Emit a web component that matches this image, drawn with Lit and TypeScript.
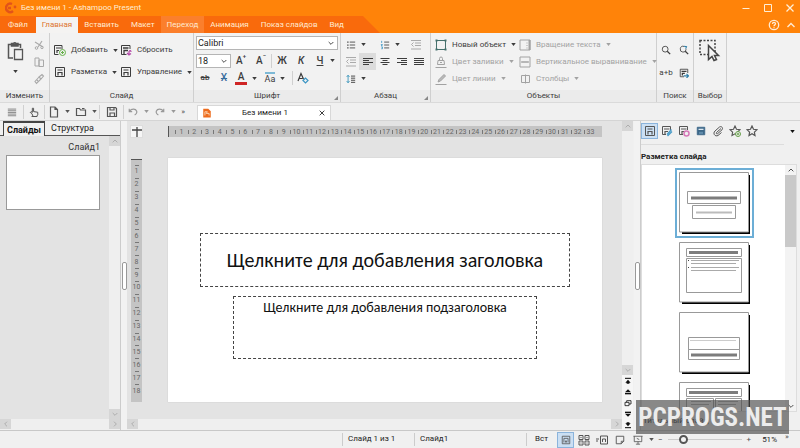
import { LitElement, html, css, svg, nothing } from "lit";
import { customElement, state } from "lit/decorators.js";
import { classMap } from "lit/directives/class-map.js";

/* Icon bodies, each drawn on a 12 x 12 grid unless noted. */
const icons: Record<string, unknown> = {
  logo: svg`<path d="M7 2a4.200 4.200 0 1 0 1 7M3 6h3" stroke="#e2531a" stroke-width="2.400"/><circle cx="10" cy="5" r="1.400" fill="#e2531a" stroke="none"/>`,
  cut: svg`<path d="M2 3l8 5M9 2L5 8" stroke-width="1.200"/><circle cx="3.500" cy="9" r="1.300"/><circle cx="9" cy="8.500" r="1.200"/>`,
  copy: svg`<path d="M2 2h4v8H2zM6 4h4.500v6.500H6z" fill="#f1f1f1"/>`,
  brush: svg`<path d="M6 4l3-2.500 1.500 1.500L8 6zM6 4L2 8.500 3.500 10.500 8 6zM4 7l1 1" stroke-width="1.100"/>`,
  layout: svg`<path d="M1.500 1.500h9v9h-9z"/><path d="M3.500 4h5M4 9.500V6.500h4v3" stroke-width="1.200"/>`,
  addSlide: svg`<path d="M8 5V1.500H.500v9h4"/><path d="M2 4h5M3 9V6.500h2" stroke-width="1.200"/><circle cx="8.500" cy="8.500" r="3" stroke="#66b04a" fill="#f1f1f1"/><path d="M7 8.500h3M8.500 7v3" stroke="#66b04a"/>`,
  reset: svg`<path d="M10 5V1.500H1.500v9h5"/><path d="M3 4h5.500M4 10V6.500h4" stroke-width="1.300"/><path d="M7 9l2 2 2-1.500M9 11V7.500c1-1.500 2-1 2 .500" stroke="#b44aa8" stroke-width="1.200"/>`,
  eraser: svg`<path d="M1 9L4 1.500 6.500 7M2 6.500h3.500" stroke-width="1.200"/><path d="M6 8.500l2.500-2.500L11 8.500 8.500 11z" stroke="#3a95c4" stroke-width="1.200"/>`,
  bullets: svg`<path d="M4.500 2.500H11M4.500 6H11M4.500 9.500H11"/><path d="M1.500 2.500h1.500M1.500 6h1.500M1.500 9.500h1.500" stroke-width="1.500"/>`,
  numbers: svg`<path d="M5 2.500h6M5 6h6M5 9.500h6"/><path d="M2 1v2.500M1 5.500h2l-1.500 1.500H3M1.500 8.500H3v2H1.500" stroke="#3a95c4"/>`,
  indent: svg`<path d="M1 1.500h10M5 4h6M5 6.500h6M1 10h10M3.500 3.500L1.500 5.500 3.500 7.500" stroke="#aaa"/>`,
  left: svg`<path d="M1 2.500h10M1 4.500h6M1 6.500h10M1 8.500h6" stroke-width="1.200"/>`,
  center: svg`<path d="M1.500 2.500h9M3.500 4.500h5M1.500 6.500h9M3.500 8.500h5" stroke-width="1.200"/>`,
  right: svg`<path d="M1 2.500h10M5 4.500h6M1 6.500h10M5 8.500h6" stroke-width="1.200"/>`,
  justify: svg`<path d="M1 2.500h10M1 4.500h10M1 6.500h10M1 8.500h10" stroke-width="1.200"/>`,
  spacing: svg`<path d="M6 2.500h5M6 5h5M6 7.500h5M6 10h5" stroke-width="1.100"/><path d="M2.500 1.500v9M.800 3.500L2.500 1.500 4.200 3.500M.800 8.500l1.700 2 1.700-2" stroke="#2f8fb8"/>`,
  object: svg`<path d="M1.500 1.500h9v9h-9z" stroke="#46716c"/><path d="M.500.500h2v2h-2zM9.500.500h2v2h-2zM.500 9.500h2v2h-2zM9.500 9.500h2v2h-2z" fill="#46716c" stroke="none"/>`,
  fill: svg`<path d="M3 4.500h6l.500 4h-7zM4.500 4V2.500a1.500 1.500 0 0 1 3 0V4M5 6.500h2M.500 11.500h11"/>`,
  pen: svg`<path d="M3 9l1-2.500L9 1.500 10.500 3 5.500 8z" fill="#bbb"/><path d="M.500 11.500h11"/>`,
  rotate: svg`<path d="M1 1h10v10H1zM8 3.500v1M8 6v1M8 8.500v1"/><path d="M10.500 1v10" stroke-width="2"/>`,
  valign: svg`<path d="M1 1h10v10H1zM2.500 6h7"/><path d="M3 5v2M5 5v2M7 5v2M9 5v2"/>`,
  columns: svg`<path d="M2.500 2.500h8v7h-8zM6.500 1.500v9"/>`,
  search: svg`<circle cx="5" cy="5" r="3.500"/><path d="M7.500 7.500L11 11" stroke-width="1.500"/>`,
  searchNext: svg`<path d="M8.500 5A3.500 3.500 0 1 1 6 1.700"/><path d="M7.500 7.500L11 11" stroke-width="1.500"/><path d="M6 1.500l3 .500L8 4.500" stroke="#2f7fa8" stroke-width="1.300"/>`,
  goto: svg`<path d="M10.500 6V1.500h-9v9H6"/><path d="M3 4h6M4 9V6.500h3" stroke-width="1.500"/><path d="M5.500 9.500H11M9 7l2.500 2.500L9 12" stroke="#2f7fa8" stroke-width="1.400"/>`,
  lines: svg`<path d="M1 2.500h10M1 4.500h10M1 6.500h10M1 8.500h10M1 10.500h10" stroke-width=".8"/>`,
  hand: svg`<path d="M3.500 8L1.500 6.500l1-1 1.500 1V1.500h1.500v4l5 .800v3L9 11.500H5z" stroke-width="1.200"/><path d="M3 11.500h7" stroke-width="1.200"/>`,
  page: svg`<path d="M2.500 1h4.500l2.500 2.500V11h-7zM7 1v2.500h2.500" stroke-width="1.200"/>`,
  folder: svg`<path d="M1.500 9.500V2.500h3l1 1.500h5v5.500zM7 2.500h2.500" stroke-width="1.200"/>`,
  save: svg`<path d="M1.500 1.500h8l1 1v8h-9zM4 1.500V4h4V1.500M4 10.500V7h4.500v3.500" stroke-width="1.200"/>`,
  undo: svg`<path d="M1.500 2v3.500H5M2 5C4 2 9 1.500 10.500 5c.500 2-1 4-2.500 4.500" stroke-width="1.400"/>`,
  redo: svg`<path d="M10.500 2v3.500H7M10 5C8 2 3 1.500 1.500 5c-.500 2 1 4 2.500 4.500" stroke-width="1.400"/>`,
  document: svg`<path d="M1.500 1h6l3 3v7.500h-9z" fill="#ed6c1e" stroke="none"/><path d="M3.500 9V4.500h3L5 6.500h3.500V9" stroke="#ffe1c4"/>`,
  cross: svg`<path d="M2.500 2.500l7 7M9.500 2.500l-7 7" stroke-width="1.300"/>`,
  help: svg`<circle cx="6" cy="6" r="4.700" stroke-width="1.300"/><path d="M4.500 5c0-2 3-2 3-.200C7.500 6 6 5.800 6 7.200M6 8.200v1" stroke-width="1.300"/>`,
  minimize: svg`<path d="M2.500 6.500h7"/>`,
  maximize: svg`<path d="M2.500 2.500h7v7h-7z"/>`,
  up: svg`<path d="M2.500 8L6 4.500 9.500 8" stroke-width="1.400"/>`,
  down: svg`<path d="M2.500 4.500L6 8l3.500-3.500" stroke-width="1.400"/>`,
  prev: svg`<path d="M7.500 2.500L4 6l3.500 3.500" stroke-width="1.400"/>`,
  next: svg`<path d="M4.500 2.500L8 6 4.500 9.500" stroke-width="1.400"/>`,
  cornerMark: svg`<path d="M6 1v10M1 4h10" stroke-width="1.300"/>`,
  editSlide: svg`<path d="M9.500 5V1.500H1.500v8H5"/><path d="M3 4h5.500M4 9V6.500h3" stroke-width="1.200"/><path d="M6 9.500l4.500-5M6.500 11l4.500-4.500" stroke="#4a9cc8" stroke-width="1.400"/>`,
  paletteSlide: svg`<path d="M9.500 5V1.500H1.500v8H5"/><path d="M3 4h5.500M4 9V6.500h2" stroke-width="1.200"/><circle cx="8.500" cy="8.500" r="2.500" stroke="#d678b8" stroke-width="1.500"/>`,
  master: svg`<path d="M1.500 1.500h9v9h-9z" fill="#3c6788" stroke="#3c6788"/><path d="M3 4h6" stroke="#e4eef5" stroke-width="1.500"/><path d="M3.500 7h5v2.500h-5z" fill="#5f8bab" stroke="none"/>`,
  clip: svg`<path d="M9 3.500L4.500 7.500c-.800.900.400 1.900 1.200 1.100L10 4.800C11.500 3 9.500.700 7.500 2L3 6C.500 8.500 3 12 6 10.500L9.500 7.500"/>`,
  starAdd: svg`<path d="M6 1l1.500 3.300 3.500.400-2.600 2.400.600 3.400L6 8.800 3 10.500l.600-3.400L1 4.700l3.500-.400z" stroke-width="1.100"/><circle cx="9" cy="9" r="2.500" stroke="#66a04a" fill="#f1f1f1"/><path d="M7.800 9h2.400M9 7.800v2.400" stroke="#66a04a"/>`,
  star: svg`<path d="M6 1l1.500 3.300 3.500.400-2.600 2.400.600 3.400L6 8.800 3 10.500l.600-3.400L1 4.700l3.500-.400z" stroke-width="1.200"/>`,
  first: svg`<path d="M1.500 2h9" stroke-width="1.600"/><path d="M6 4l4 4.500H8V10H4V8.500H2z" fill="currentColor" stroke="none"/>`,
  previous: svg`<path d="M6 2l4.500 4.500h-9z" fill="currentColor" stroke="none"/><path d="M1.500 8.500h9" stroke-width="2"/>`,
  pages: svg`<path d="M1.500 5h6v5h-6zM4 5V2.500h6.500v5h-3" stroke-width="1.200"/>`,
  following: svg`<path d="M6 10l4.500-4.500h-9z" fill="currentColor" stroke="none"/><path d="M1.500 3.500h9" stroke-width="2"/>`,
  last: svg`<path d="M1.500 10h9" stroke-width="1.600"/><path d="M6 8l4-4.500H8V2H4v1.500H2z" fill="currentColor" stroke="none"/>`,
  normal: svg`<path d="M1.500 1.500h9v9h-9zM3.500 9V4h5v5M5.500 9V7h1v2"/>`,
  sorter: svg`<path d="M1 1.500h4v4H1zM7 1.500h4v4H7zM1 7h4v4H1zM7 7h4v4H7zM2.500 3.500h1M8.500 3.500h1M2.500 9h1M8.500 9h1"/>`,
  outline: svg`<path d="M4.500 2h7v8h-7zM6.500 8V5h3v3M0 5h3M0 7h2"/>`,
  notes: svg`<path d="M1.500 1.500h9v6l-3 3h-6zM10.500 7.500h-3v3" stroke-width="1.100"/>`,
  show: svg`<path d="M.500 1.500h11M1.500 1.500v6.500h9V1.500M6 8v3M3.500 11h5M4.500 4l3 1.500"/>`,
};

const icon = (name: string, cls = "") => html`<svg class="icon ${cls}" viewBox="0 0 12 12" aria-hidden="true">${icons[name]}</svg>`;
const arrow = html`<svg class="arrow" viewBox="0 0 6 4" aria-hidden="true"><path d="M0 0h6L3 4z" /></svg>`;

const tabs = ["Файл", "Главная", "Вставить", "Макет", "Переход", "Анимация", "Показ слайдов", "Вид"];
const range = (n: number) => Array.from({ length: n }, (_, i) => i + 1);

@customElement("app-root")
export class AppRoot extends LitElement {
  @state() private tab = "Главная";
  @state() private zoom = 51;

  static styles = css`
    :host {
      display: flex;
      flex-direction: column;
      min-height: 100vh;
      position: relative;
      overflow: hidden;
      background: #f0f0f0;
      color: #3c3c3c;
      font: 8px/12px Roboto, "Open Sans", "Noto Sans", sans-serif;
    }
    * { box-sizing: border-box; }
    button {
      display: flex;
      align-items: center;
      justify-content: center;
      flex: none;
      gap: 5px;
      margin: 0;
      padding: 0;
      border: 0;
      background: none;
      color: inherit;
      font: inherit;
      white-space: nowrap;
    }
    .icon {
      display: block;
      flex: none;
      width: 12px;
      height: 12px;
      fill: none;
      stroke: currentColor;
    }
    .small { width: 10px; height: 10px; }
    .tiny { width: 8px; height: 8px; }
    .arrow { width: 5px; height: 3px; flex: none; fill: currentColor; }

    .titlebar { display: flex; align-items: center; height: 16px; padding: 0 4px 0 5px; gap: 4px; background: #ff8309; color: #ffeed6; }
    .titlebar h1 { flex: 1; margin: 0; font: inherit; }
    .window-buttons { display: flex; gap: 10px; }
    .tabbar { display: flex; height: 17px; background: #ff8309; color: #ffead2; }
    .tabs { display: flex; padding-right: 30px; background: #f96a0c; clip-path: polygon(0 0, calc(100% - 17px) 0, 100% 100%, 0 100%); }
    .tab { padding: 0 6px; }
    .tab:first-child { padding: 0 8px; }
    .tab.near { background: #fb7f2c; }
    .tab.active { margin-top: 1px; background: #f4f3f2; color: #dd7330; }
    .tab-tools { display: flex; gap: 5px; margin-left: auto; padding-right: 3px; align-items: center; }

    .ribbon { display: flex; height: 70px; border-bottom: 1px solid #dadada; background: #f2f2f2; }
    .group { display: flex; flex-direction: column; flex: none; border-right: 1px solid #cfcfcf; }
    .edit { width: 50px; }
    .slide-group { width: 144px; }
    .font-group { width: 147px; }
    .para-group { width: 90px; }
    .object-group { width: 226px; }
    .find-group { width: 37px; }
    .select-group { width: 33px; }
    .group-body { flex: 1; display: grid; align-content: start; justify-content: start; }
    .group-name { position: relative; display: flex; justify-content: center; height: 12px; margin: 0; background: #ebebeb; font: inherit; }
    .launcher { position: absolute; right: 2px; bottom: 2px; width: 4px; height: 4px; background: #888; clip-path: polygon(100% 0, 100% 100%, 0 100%); }
    .row { display: flex; align-items: center; }
    .edit .group-body { grid-template-columns: 31px 16px; padding: 3px 0 0; }
    .paste { flex-direction: column; gap: 9px; padding-top: 5px; grid-row: 1 / 4; justify-content: start; }
    .paste-icon { width: 17px; height: 20px; fill: none; stroke: #555; }
    .tools { display: grid; grid-auto-rows: 17px; color: #a9a9a9; }
    .slide-group .group-body { grid-template-columns: 66px auto; grid-auto-rows: 22px; padding: 6px 0 0 4px; }
    .slide-group .group-body button { justify-content: start; }
    .font-group .group-body { grid-template-rows: 16px 17px 18px; padding: 3px 2px 0; grid-template-columns: 1fr; justify-content: stretch; }
    .field { position: relative; display: flex; align-items: center; height: 14px; border: 1px solid #b5b5b5; background: #fff; }
    .field .icon { position: absolute; right: 2px; pointer-events: none; }
    .field select { width: 100%; height: 12px; margin: 0; padding: 0 1px; border: 0; appearance: none; background: none; color: #222; font: inherit; font-size: 9px; }
    .size { width: 35px; }
    .glyph { width: 20px; height: 16px; font-size: 10px; font-weight: 500; gap: 0; }
    .glyph.slant { width: 18px; font-style: italic; }
    .glyph.line { text-decoration: underline; }
    .glyph.crossed { width: 18px; font-size: 8px; text-decoration: line-through; }
    .glyph.blue { color: #386d9d; text-decoration: line-through; }
    .glyph.case { font-size: 9px; font-weight: 400; border-top: 2px solid #7db9d6; height: 13px; width: 10px; margin: 0 5px 0 8px; line-height: 10px; }
    .glyph.colour { width: 12px; height: 13px; margin: 0 5px 0 1px; border-bottom: 3px solid #cf2626; line-height: 10px; }
    .glyph sup { font-size: 6px; line-height: 6px; align-self: start; }
    .rule { width: 1px; height: 14px; background: #d0d0d0; flex: none; }
    .row .rule.spaced { margin-left: 7px; }
    .para-group .group-body { grid-template-columns: repeat(5, 17px); grid-auto-rows: 17px; padding: 3px 1px 0; }
    .para-group .wide { justify-content: start; padding-left: 4px; grid-column: span 2; }
    .para-group .near { justify-content: start; }
    .para-group .chosen { background: #dcdcdc; }
    .object-group .group-body { grid-template-columns: 84px auto; grid-auto-rows: 17px; padding: 3px 0 0 4px; }
    .object-group button { justify-content: start; color: #a2a2a2; }
    .object-group button.enabled { color: #3c3c3c; }
    .find-group .group-body { grid-template-columns: 18px 18px; grid-auto-rows: 23px; padding-top: 5px; }
    .select-group .group-body { justify-content: center; padding-top: 6px; }
    .pick-icon { width: 22px; height: 23px; fill: none; stroke: #444; }

    .quickbar { display: flex; height: 18px; border-bottom: 1px solid #d4d4d4; }
    .quick { display: flex; align-items: center; width: 197px; color: #555; }
    .quick button { width: 17px; }
    .quick .more { width: 10px; }
    .quick .first-button { width: 23px; }
    .quick .wide { width: 20px; }
    .quick .save { width: 23px; }
    .quick .off { color: #999; }
    .document-tab { display: flex; align-items: center; width: 134px; margin-top: 2px; padding: 0 4px; border: 1px solid #d8d8d8; border-bottom: 0; background: #fff; color: #222; }
    .document-tab span { flex: 1; text-align: center; }

    .workspace { flex: 1; display: flex; min-height: 0; }
    .slides { display: flex; flex-direction: column; width: 121px; flex: none; border-right: 1px solid #ccc; }
    .side-tabs { display: flex; height: 15px; padding-left: 3px; border-bottom: 1px solid #555; color: #222; font-size: 9px; }
    .side-tabs button { padding: 0 6px; }
    .side-tabs button.active { margin-bottom: -1px; padding: 0 3px; border: 1px solid #444; border-width: 2px 1px 0; background: #f0f0f0; font-weight: 700; color: #111; }
    .slides-body { flex: 1; display: flex; }
    .thumb-list { flex: 1; display: flex; flex-direction: column; align-items: end; padding: 5px 9px 0 6px; background: #e3e3e3; color: #333; font-size: 9px; }
    .thumb { width: 100%; height: 55px; margin-top: 2px; border: 1px solid #999; background: #fff; }
    .vscroll { display: flex; flex-direction: column; justify-content: space-between; width: 11px; flex: none; background: #efefef; color: #aaa; }
    .vscroll button, .hscroll button { width: 11px; height: 10px; background: #d6d6d6; }
    .hscroll { display: flex; justify-content: space-between; height: 11px; background: #efefef; color: #aaa; }
    .splitter { display: flex; align-items: center; justify-content: center; width: 6px; flex: none; background: #f2f2f2; }
    .grip { width: 5px; height: 28px; border: 1px solid #999; border-radius: 2px; background: #fff; }

    .stage { flex: 1; display: flex; flex-direction: column; min-width: 0; }
    .canvas { flex: 1; display: grid; grid-template: 37px 1fr / 41px 1fr; padding: 0 20px 17px 0; background: #e3e3e3; }
    .corner { width: 13px; height: 13px; margin: 4px 0 0 3px; background: #f6f6f6; border: 1px solid #ddd; color: #444; }
    .hruler { display: flex; align-self: start; height: 11px; margin-top: 5px; padding: 0 5px 0 6px; border-left: 1px solid #555; background: #c4c4c4; color: #666; font-size: 7px; }
    .vruler { display: flex; flex-direction: column; width: 11px; margin: 1px 0 0 4px; padding: 5px 0; border-top: 1px solid #555; background: #c4c4c4; color: #666; font-size: 7px; }
    .mark { flex: 1; display: flex; align-items: center; justify-content: center; min-width: 0; min-height: 0; line-height: 8px; }
    .hruler .mark { background: linear-gradient(#777, #777) 0 50% / 1px 4px no-repeat; }
    .vruler .mark { background: linear-gradient(#777, #777) 50% 0 / 4px 1px no-repeat; }
    .slide { display: flex; flex-direction: column; gap: 9px; padding: 75px 32px 0; background: #fff; box-shadow: 0 0 1px #bbb; color: #111; font-family: Carlito, Lato, "Open Sans", sans-serif; text-align: center; }
    .slide-title { display: flex; align-items: center; justify-content: center; height: 54px; margin: 0; border: 1px dashed #444; font-size: 20px; font-weight: 400; line-height: 24px; white-space: nowrap; }
    .slide-subtitle { height: 63px; margin: 0 33px; padding-top: 2px; border: 1px dashed #444; font-size: 14px; line-height: 18px; white-space: nowrap; }
    .page-nav { display: flex; flex-direction: column; color: #111; }
    .page-nav button { width: 11px; height: 11px; background: #f6f6f6; }
    .scroll-column { display: flex; flex-direction: column; width: 12px; flex: none; }
    .scroll-column .vscroll { flex: 1; }

    .layouts { display: flex; flex-direction: column; width: 160px; flex: none; padding-right: 3px; border-left: 1px solid #ccc; }
    .layout-tools { display: flex; align-items: center; height: 24px; margin-right: 13px; border-bottom: 1px solid #ddd; color: #555; padding-bottom: 3px; }
    .layout-tools button { width: 17px; height: 16px; }
    .layout-tools .chosen, .views .chosen { background: #cbdff3; border: 1px solid #8bb4dc; }
    .layout-tools .menu { margin-left: auto; margin-right: -13px; width: 10px; color: #111; }
    .layouts h2 { margin: 5px 0 0; height: 14px; font-size: 8px; line-height: 14px; color: #222; }
    .gallery { flex: 1; display: flex; min-height: 0; border: 1px solid #ddd; background: #fff; }
    .gallery ul { flex: 1; display: flex; flex-direction: column; align-items: center; height: 246px; margin: 0; padding: 3px 0 0 1px; overflow: hidden; list-style: none; }
    .choice { flex: none; padding: 2px; border: 2px solid transparent; }
    .choice.chosen { border-color: #6caed6; }
    .choice svg { display: block; width: 71px; height: 62px; fill: none; stroke: #999; }
    .gallery .vscroll { background: #f3f3f3; justify-content: start; color: #444; }
    .gallery .vscroll button { background: none; }
    .thumb-bar { height: 72px; background: #c9c9c9; }
    .gallery .vscroll .end { margin-top: auto; }
    .caption { margin: 0; height: 18px; padding-left: 2px; line-height: 18px; color: #222; }

    .status { display: flex; align-items: center; height: 18px; border-top: 1px solid #c8c8c8; color: #222; }
    .status > span { border-left: 1px solid #ccc; height: 13px; padding-left: 5px; }
    .status .number { width: 72px; margin-left: auto; }
    .status .name { width: 112px; }
    .status .mode { width: 31px; padding-left: 8px; }
    .views { display: flex; align-items: center; gap: 1px; color: #555; }
    .views button { width: 17px; height: 16px; }
    .views .menu { width: 9px; }
    .status button { color: #555; }
    .zoom { display: flex; align-items: center; gap: 5px; padding-left: 2px; width: 144px; }
    .zoom input { width: 74px; height: 12px; margin: 0; appearance: none; background: linear-gradient(#ccc, #ccc) 0 50% / 100% 1px no-repeat; }
    .zoom input::-webkit-slider-thumb { appearance: none; width: 9px; height: 9px; border: 2px solid #555; border-radius: 50%; background: #f4f4f4; }
    .zoom output { margin-left: 6px; }
    .zoom .more { margin: 0 0 6px 3px; }
    .watermark { position: absolute; right: 11px; bottom: 14px; width: 153px; height: 34px; background: rgb(80 80 80 / 68%); color: #ececec; font: 700 25px/36px "Roboto Condensed", "Liberation Sans Narrow", "DejaVu Sans Condensed", Roboto, sans-serif; text-align: center; white-space: nowrap; pointer-events: none; }
  `;

  private group(cls: string, name: string, body: unknown, launcher = false) {
    return html`<section class="group ${cls}">
      <div class="group-body">${body}</div>
      <h2 class="group-name">${name}${launcher ? html`<i class="launcher"></i>` : nothing}</h2>
    </section>`;
  }

  private tool(name: string, label: string, cls = "", size = "") {
    return html`<button class=${cls} aria-label=${label}>${icon(name, size)}</button>`;
  }

  private command(name: string, label: string, menu = true, cls = "") {
    return html`<button class=${cls}>${icon(name)}${label}${menu ? arrow : nothing}</button>`;
  }

  private scroll(direction: string, label: string, cls = "") {
    return this.tool(direction, label, cls, "tiny");
  }

  private renderRibbon() {
    return html`<div class="ribbon">
      ${this.group("edit", "Изменить", html`
        <button class="paste" aria-label="Вставить из буфера">
          <svg class="paste-icon" viewBox="0 0 17 20"><path d="M6 17H1.500V3.500h12V7M4.500 5V2.500h2a1.500 1.500 0 0 1 2.500 0h2V5z" stroke-width="1.500" /><path d="M7.500 8.500h8v10h-8z" stroke-width="1.300" fill="#f2f2f2" /></svg>
          ${arrow}
        </button>
        <div class="tools">${this.tool("cut", "Вырезать")}${this.tool("copy", "Копировать")}${this.tool("brush", "Формат")}</div>`)}
      ${this.group("slide-group", "Слайд", html`
        ${this.command("addSlide", "Добавить")}${this.command("reset", "Сбросить", false)}
        ${this.command("layout", "Разметка")}${this.command("layout", "Управление")}`)}
      ${this.group("font-group", "Шрифт", html`
        <div class="field"><select aria-label="Шрифт"><option>Calibri</option></select>${icon("down", "tiny")}</div>
        <div class="row">
          <div class="field size"><select aria-label="Размер"><option>18</option></select>${icon("down", "tiny")}</div>
          <button class="glyph" aria-label="Увеличить">A<sup>+</sup></button>
          <button class="glyph" aria-label="Уменьшить">A<sup>−</sup></button>
          <i class="rule"></i>
          <button class="glyph">Ж</button><button class="glyph slant">К</button>
          <button class="glyph line">Ч</button>${arrow}
        </div>
        <div class="row">
          <button class="glyph crossed">ab</button><button class="glyph blue">X</button>
          <button class="glyph colour" aria-label="Цвет">A</button>${arrow}
          <button class="glyph case" aria-label="Регистр">Aa</button>${arrow}
          <i class="rule spaced"></i>
          <button class="glyph" aria-label="Очистить">${icon("eraser")}</button>
        </div>`, true)}
      ${this.group("para-group", "Абзац", html`
        <button class="wide" aria-label="Маркеры">${icon("bullets", "small")}${arrow}</button>
        <button class="wide" aria-label="Нумерация">${icon("numbers", "small")}${arrow}</button>
        ${this.tool("indent", "Отступ", "near")}
        ${["indent", "left", "center", "right", "justify"].map((n, i) => this.tool(n, n, i === 1 ? "chosen" : ""))}
        <button class="wide" aria-label="Интервал">${icon("spacing", "small")}${arrow}</button>`, true)}
      ${this.group("object-group", "Объекты", html`
        ${this.command("object", "Новый объект", true, "enabled")}${this.command("rotate", "Вращение текста")}
        ${this.command("fill", "Цвет заливки")}${this.command("valign", "Вертикальное выравнивание")}
        ${this.command("pen", "Цвет линии")}${this.command("columns", "Столбцы")}`)}
      ${this.group("find-group", "Поиск", html`
        ${this.tool("search", "Найти", "", "small")}${this.tool("searchNext", "Найти далее", "", "small")}
        <button>a+b</button>${this.tool("goto", "Перейти", "", "small")}`)}
      ${this.group("select-group", "Выбор", html`
        <button aria-label="Выбрать"><svg class="pick-icon" viewBox="0 0 22 23"><path d="M1 1.500h15v14H1z" stroke-dasharray="2 1.500" stroke-width="1.500" /><path d="M9.500 6.500v14l3.500-3 2 4 2.500-1-2-4h4z" fill="#f4f4f4" stroke-width="1.500" /></svg></button>`)}
    </div>`;
  }

  private renderQuickbar() {
    return html`<div class="quickbar">
      <div class="quick">
        ${this.tool("lines", "Меню", "first-button", "small")}<i class="rule"></i>
        ${this.tool("hand", "Сенсорный режим", "wide", "small")}<i class="rule"></i>
        ${this.tool("page", "Создать")}<button class="more" aria-label="Ещё">${arrow}</button>
        ${this.tool("folder", "Открыть")}<button class="more" aria-label="Ещё">${arrow}</button><i class="rule"></i>
        ${this.tool("save", "Сохранить", "save")}<i class="rule"></i>
        ${this.tool("undo", "Отменить", "off", "small")}<button class="more off" aria-label="Ещё">${arrow}</button>
        ${this.tool("redo", "Повторить", "off", "small")}<button class="more off" aria-label="Ещё">${arrow}</button>
        <button class="more">»</button>
      </div>
      <div class="document-tab">${icon("document", "small")}<span>Без имени 1</span><button aria-label="Закрыть документ">${icon("cross", "tiny")}</button></div>
    </div>`;
  }

  private renderLayouts() {
    const frame = svg`<path d="M3 61h67.500V3" stroke="#000" stroke-width="2.500"/><path d="M.500.500h69v59.500H.500z" fill="#fff"/>`;
    const shapes = [
      svg`${frame}<path d="M8.500 19.500h53v12h-53zM13.500 33.500h43v13h-43z"/><path d="M12 26h46" stroke="#7c7c7c" stroke-width="3"/><path d="M17 40.500h36" stroke="#bbb" stroke-width="2"/>`,
      svg`${frame}<path d="M7.500 6.500h55v8h-55zM7.500 16.500h55v34h-55z"/><path d="M10 10.500h49" stroke="#7c7c7c" stroke-width="3"/><path d="M12 18.500h48M12 21.500h45M12 25.500h48M12 28.500h45" stroke="#aaa"/><path d="M9 18.500h1M9 25.500h1" stroke="#444"/>`,
      svg`${frame}<path d="M9.500 25.500h51v12h-51zM9.500 37.500h51v10h-51z"/><path d="M11 28.500h46" stroke="#ccc"/><path d="M12 43h46" stroke="#7c7c7c" stroke-width="3"/>`,
      svg`${frame}<path d="M7.500 6.500h55v8h-55zM7.500 16.500h27v34h-27zM36.500 16.500h26v34h-26z"/><path d="M10 10.500h49" stroke="#7c7c7c" stroke-width="3"/><path d="M12 19.500h20M12 22.500h18M39 19.500h20M39 22.500h18" stroke="#aaa"/>`,
    ];
    return html`<aside class="layouts">
      <div class="layout-tools">
        ${this.tool("layout", "Разметка", "chosen")}${this.tool("editSlide", "Правка")}${this.tool("paletteSlide", "Палитра")}
        ${this.tool("master", "Образец", "", "small")}${this.tool("clip", "Вложение")}${this.tool("starAdd", "Добавить анимацию")}${this.tool("star", "Анимация")}
        <button class="menu" aria-label="Меню панели">${arrow}</button>
      </div>
      <h2>Разметка слайда</h2>
      <div class="gallery">
        <ul>${shapes.map((s, i) => html`<li class="choice ${classMap({ chosen: i === 0 })}"><svg viewBox="0 0 71 62">${s}</svg></li>`)}</ul>
        <div class="vscroll">${this.scroll("up", "Вверх")}<div class="thumb-bar"></div>${this.scroll("down", "Вниз", "end")}</div>
      </div>
      <p class="caption">Титульный слайд</p>
    </aside>`;
  }

  render() {
    return html`
      <header class="titlebar">
        ${icon("logo")}<h1>Без имени 1 - Ashampoo Present</h1>
        <div class="window-buttons">${this.tool("minimize", "Свернуть")}${this.tool("maximize", "Развернуть")}${this.tool("cross", "Закрыть")}</div>
      </header>
      <nav class="tabbar">
        <div class="tabs">${tabs.map((t) => html`<button class="tab ${classMap({ active: t === this.tab, near: t === "Переход" })}" @click=${() => (this.tab = t)}>${t}</button>`)}</div>
        <div class="tab-tools">${this.tool("help", "Справка")}${this.tool("up", "Свернуть ленту")}</div>
      </nav>
      ${this.renderRibbon()} ${this.renderQuickbar()}
      <div class="workspace">
        <aside class="slides">
          <div class="side-tabs"><button class="active">Слайды</button><button>Структура</button></div>
          <div class="slides-body">
            <div class="thumb-list"><span>Слайд1</span><div class="thumb"></div></div>
            <div class="vscroll">${this.scroll("up", "Вверх")}${this.scroll("down", "Вниз")}</div>
          </div>
          <div class="hscroll">${this.scroll("prev", "Влево")}${this.scroll("next", "Вправо")}</div>
        </aside>
        <div class="splitter"><i class="grip"></i></div>
        <main class="stage">
          <div class="canvas">
            <button class="corner" aria-label="Табуляция">${icon("cornerMark")}</button>
            <div class="hruler">${range(33).map((n) => html`<span class="mark">${n}</span>`)}</div>
            <div class="vruler">${range(18).map((n) => html`<span class="mark">${n}</span>`)}</div>
            <article class="slide">
              <h3 class="slide-title">Щелкните для добавления заголовка</h3>
              <p class="slide-subtitle">Щелкните для добавления подзаголовка</p>
            </article>
          </div>
          <div class="hscroll">${this.scroll("prev", "Влево")}${this.scroll("next", "Вправо")}</div>
        </main>
        <div class="scroll-column">
          <div class="vscroll">${this.scroll("up", "Вверх")}${this.scroll("down", "Вниз")}</div>
          <div class="page-nav">${["first", "previous", "pages", "following", "last"].map((n) => this.tool(n, n, "", "tiny"))}</div>
        </div>
        <div class="splitter"><i class="grip"></i></div>
        ${this.renderLayouts()}
      </div>
      <footer class="status">
        <span class="number">Слайд 1 из 1</span><span class="name">Слайд1</span><span class="mode">Вст</span>
        <div class="views">
          ${this.tool("normal", "Обычный", "chosen", "small")}${this.tool("sorter", "Сортировщик")}${this.tool("outline", "Структура")}
          ${this.tool("notes", "Заметки", "", "small")}${this.tool("show", "Показ", "", "small")}<button class="menu" aria-label="Ещё">${arrow}</button>
        </div>
        <div class="zoom">
          <button aria-label="Уменьшить">−</button>
          <input type="range" aria-label="Масштаб" min="10" max="250" .value=${String(this.zoom)} @input=${(e: Event) => (this.zoom = Number((e.target as HTMLInputElement).value))} />
          <button aria-label="Увеличить">+</button><output>${this.zoom}%</output><button class="more">»</button>
        </div>
      </footer>
      <div class="watermark">PCPROGS.NET</div>`;
  }
}
